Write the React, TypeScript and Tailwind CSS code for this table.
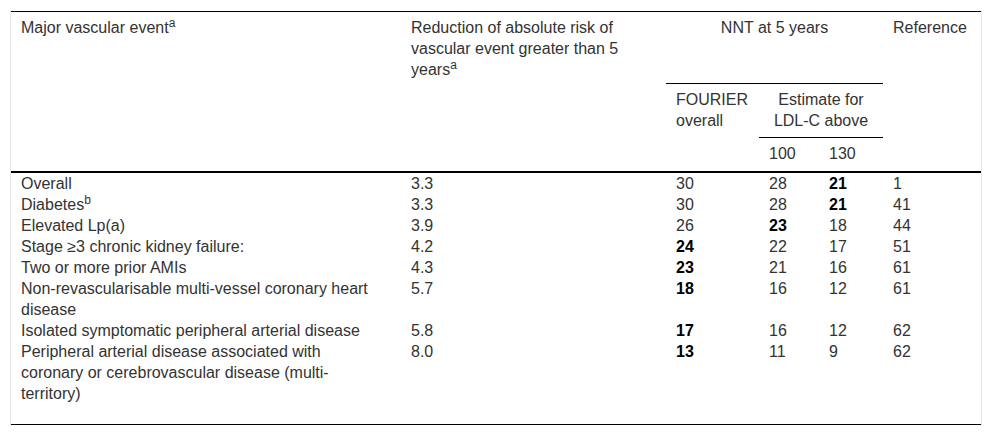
type Row = {
  event: React.ReactNode;
  risk: string;
  fourier: string;
  ldl100: string;
  ldl130: string;
  ref: string;
  bold: "fourier" | "ldl100" | "ldl130";
};

const rows: Row[] = [
  { event: "Overall", risk: "3.3", fourier: "30", ldl100: "28", ldl130: "21", ref: "1", bold: "ldl130" },
  {
    event: (
      <>
        Diabetes<sup>b</sup>
      </>
    ),
    risk: "3.3",
    fourier: "30",
    ldl100: "28",
    ldl130: "21",
    ref: "41",
    bold: "ldl130",
  },
  { event: "Elevated Lp(a)", risk: "3.9", fourier: "26", ldl100: "23", ldl130: "18", ref: "44", bold: "ldl100" },
  { event: "Stage ≥3 chronic kidney failure:", risk: "4.2", fourier: "24", ldl100: "22", ldl130: "17", ref: "51", bold: "fourier" },
  { event: "Two or more prior AMIs", risk: "4.3", fourier: "23", ldl100: "21", ldl130: "16", ref: "61", bold: "fourier" },
  {
    event: "Non-revascularisable multi-vessel coronary heart disease",
    risk: "5.7",
    fourier: "18",
    ldl100: "16",
    ldl130: "12",
    ref: "61",
    bold: "fourier",
  },
  {
    event: "Isolated symptomatic peripheral arterial disease",
    risk: "5.8",
    fourier: "17",
    ldl100: "16",
    ldl130: "12",
    ref: "62",
    bold: "fourier",
  },
  {
    event: "Peripheral arterial disease associated with coronary or cerebrovascular disease (multi-territory)",
    risk: "8.0",
    fourier: "13",
    ldl100: "11",
    ldl130: "9",
    ref: "62",
    bold: "fourier",
  },
];

const th = "px-[10px] pt-[5px] align-top text-left font-normal";
const td = "px-[10px] align-top";

export default function App() {
  return (
    <div className="min-h-[436px] bg-white pl-[10px] pt-[10px] text-[16px] leading-[21px] text-[#333] [font-family:'Liberation_Sans',Arial,sans-serif]">
      <div className="w-[972px] border-x border-[#e8e8e8] pt-[1px]">
        <table className="w-[970px] table-fixed border-separate border-spacing-0 border-y border-black">
          <colgroup>
            <col className="w-[390px]" />
            <col className="w-[265px]" />
            <col className="w-[93px]" />
            <col className="w-[60px]" />
            <col className="w-[64px]" />
            <col className="w-[98px]" />
          </colgroup>
          <thead>
            <tr className="h-[72px]">
              <th rowSpan={3} className={`${th} !pr-[25px] border-b-2 border-black`}>
                Major vascular event<sup>a</sup>
              </th>
              <th rowSpan={3} className={`${th} border-b-2 border-black`}>
                Reduction of absolute risk of vascular event greater than 5 years<sup>a</sup>
              </th>
              <th colSpan={3} className={`${th} border-b border-black !text-center`}>
                NNT at 5 years
              </th>
              <th rowSpan={3} className={`${th} border-b-2 border-black`}>
                Reference
              </th>
            </tr>
            <tr className="h-[54px]">
              <th rowSpan={2} className={`${th} border-b-2 border-black`}>
                FOURIER overall
              </th>
              <th colSpan={2} className={`${th} border-b border-black !text-center`}>
                Estimate for LDL-C above
              </th>
            </tr>
            <tr className="h-[35px]">
              <th className={`${th} border-b-2 border-black`}>100</th>
              <th className={`${th} border-b-2 border-black`}>130</th>
            </tr>
          </thead>
          <tbody>
            {rows.map((r, i) => {
              const last = i === rows.length - 1 ? " pb-[20px]" : "";
              const num = (k: Row["bold"]) =>
                r.bold === k ? `${td}${last} font-bold text-black` : `${td}${last}`;
              return (
                <tr key={i}>
                  <td className={`${td}${last} !pr-[25px]`}>{r.event}</td>
                  <td className={`${td}${last}`}>{r.risk}</td>
                  <td className={num("fourier")}>{r.fourier}</td>
                  <td className={num("ldl100")}>{r.ldl100}</td>
                  <td className={num("ldl130")}>{r.ldl130}</td>
                  <td className={`${td}${last}`}>{r.ref}</td>
                </tr>
              );
            })}
          </tbody>
        </table>
      </div>
    </div>
  );
}
